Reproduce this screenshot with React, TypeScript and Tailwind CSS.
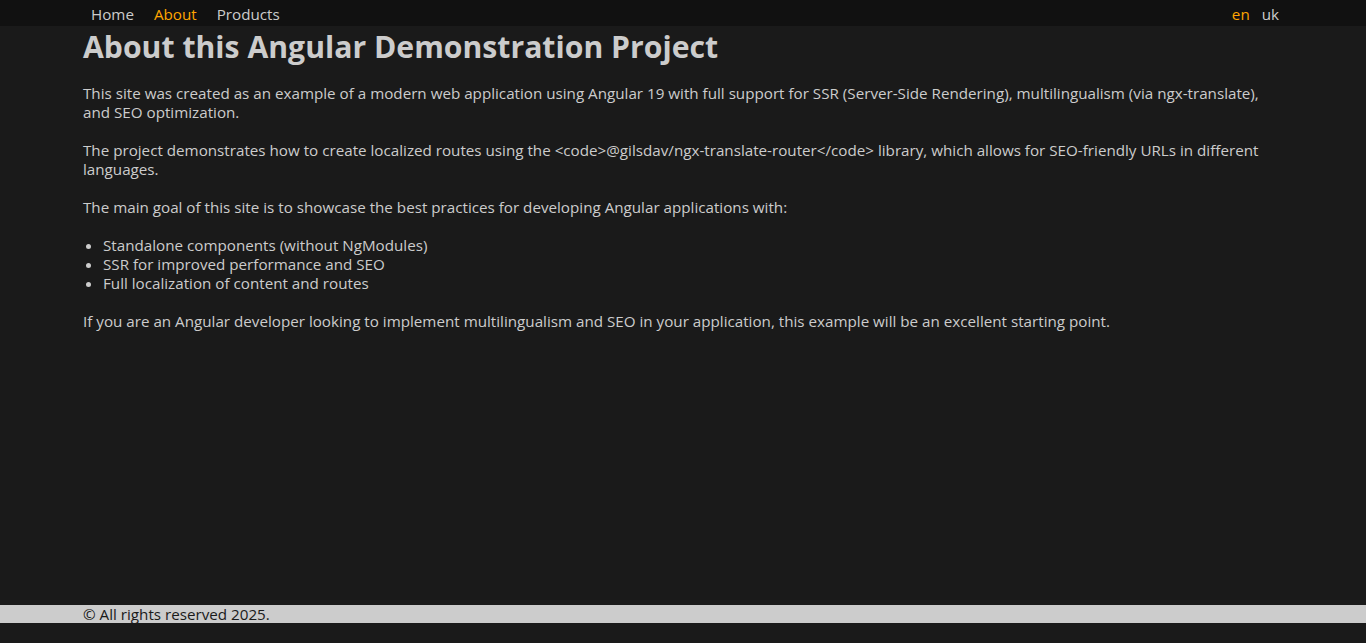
import React from "react";

export default function App() {
  return (
    <div
      className="min-h-screen flex flex-col bg-[#1a1a1a] text-[#cccccc] pb-[20px]"
      style={{ fontFamily: "'Open Sans', sans-serif" }}
    >
      <header className="bg-[#111111] h-[26px]">
        <nav className="max-w-[1200px] mx-auto flex justify-between items-start h-full text-[15.2px] leading-[20px] pt-[4px]">
          <div className="flex gap-1">
            <a className="px-2">Home</a>
            <a className="px-2 text-[#ffa500]">About</a>
            <a className="px-2">Products</a>
          </div>
          <div className="flex gap-1">
            <a className="px-1 text-[#ffa500]">en</a>
            <a className="px-1">uk</a>
          </div>
        </nav>
      </header>
      <main className="flex-1 max-w-[1200px] w-full mx-auto text-[15.2px] leading-[19px]">
        <h1 className="mt-[1px] text-[30.2px] font-bold leading-[40px]">About this Angular Demonstration Project</h1>
        <p className="mt-[17px]">
          This site was created as an example of a modern web application using Angular 19 with full support for SSR
          (Server-Side Rendering), multilingualism (via ngx-translate), and SEO optimization.
        </p>
        <p className="mt-[19px]">
          The project demonstrates how to create localized routes using the &lt;code&gt;@gilsdav/ngx-translate-router&lt;/code&gt;
          library, which allows for SEO-friendly URLs in different languages.
        </p>
        <p className="mt-[19px]">
          The main goal of this site is to showcase the best practices for developing Angular applications with:
        </p>
        <ul className="mt-[19px] list-disc pl-5">
          <li>Standalone components (without NgModules)</li>
          <li>SSR for improved performance and SEO</li>
          <li>Full localization of content and routes</li>
        </ul>
        <p className="mt-[19px]">
          If you are an Angular developer looking to implement multilingualism and SEO in your application, this example
          will be an excellent starting point.
        </p>
      </main>
      <footer className="bg-[#cccccc] text-[#1a1a1a] h-[18px]">
        <div className="max-w-[1200px] mx-auto text-[15.2px] leading-[17px] pt-[1px]">© All rights reserved 2025.</div>
      </footer>
    </div>
  );
}
